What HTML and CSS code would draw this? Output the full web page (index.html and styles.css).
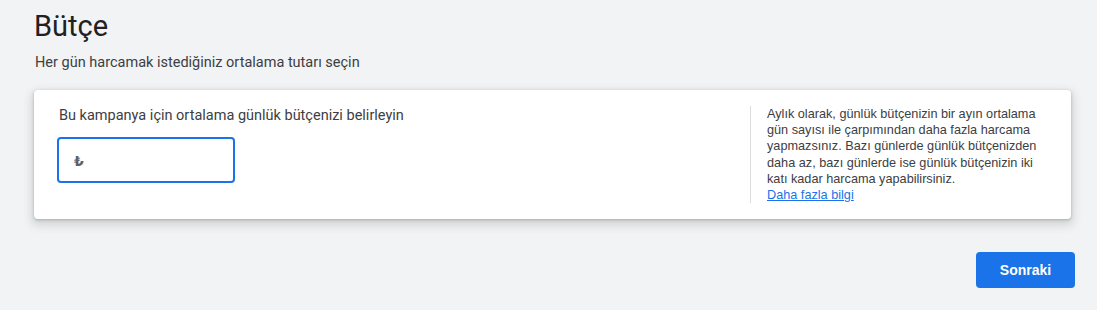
FILE: index.html
```html
<!DOCTYPE html>
<html lang="tr">
<head>
<meta charset="utf-8">
<title>Bütçe</title>
<link rel="stylesheet" href="styles.css">
</head>
<body>
<div class="page">
  <div class="content">
    <h1 class="title">Bütçe</h1>
    <p class="subtitle">Her gün harcamak istediğiniz ortalama tutarı seçin</p>
    <div class="card">
      <div class="card-main">
        <div class="label">Bu kampanya için ortalama günlük bütçenizi belirleyin</div>
        <div class="input-box"><span class="currency">₺</span></div>
      </div>
      <div class="card-help">
        Aylık olarak, günlük bütçenizin bir ayın ortalama gün sayısı ile çarpımından daha fazla harcama yapmazsınız. Bazı günlerde günlük bütçenizden daha az, bazı günlerde ise günlük bütçenizin iki katı kadar harcama yapabilirsiniz.<br>
        <a class="link" href="#">Daha fazla bilgi</a>
      </div>
    </div>
  </div>
  <div class="footer">
    <button class="next">Sonraki</button>
  </div>
</div>
</body>
</html>
```

FILE: styles.css
```css
html, body {
  margin: 0;
  padding: 0;
  background: #f1f3f4;
  font-family: Roboto, "Liberation Sans", Arial, sans-serif;
}
.page {
  width: 1097px;
  height: 310px;
  box-sizing: border-box;
}
.content {
  padding: 8px 26px 0 34px;
}
.title {
  margin: 0;
  font-size: 29px;
  line-height: 36px;
  font-weight: 400;
  color: #202124;
}
.subtitle {
  margin: 9px 0 0 1px;
  font-size: 14.5px;
  line-height: 20px;
  color: #3c4043;
}
.card {
  margin-top: 17px;
  background: #fff;
  border-radius: 4px;
  box-shadow: 0 1px 3px rgba(60,64,67,.3), 0 4px 8px 3px rgba(60,64,67,.15);
  display: flex;
  align-items: flex-start;
  padding: 16px 22px 16px 24px;
}
.card-main {
  flex: 1;
}
.label {
  font-size: 14.5px;
  line-height: 20px;
  color: #3c4043;
  margin-left: 1px;
}
.input-box {
  margin-top: 11px;
  margin-left: -1px;
  width: 178px;
  height: 46px;
  box-sizing: border-box;
  border: 2px solid #1a73e8;
  border-radius: 4px;
  display: flex;
  align-items: center;
  padding-left: 15px;
}
.currency {
  font-size: 14px;
  font-weight: 700;
  color: #5f6368;
  font-family: "DejaVu Sans", sans-serif;
  margin-top: 1px;
}
.card-help {
  width: 282px;
  border-left: 1px solid #dadce0;
  padding-left: 16px;
  font-family: "Liberation Sans", Arial, sans-serif;
  font-size: 12.7px;
  line-height: 16.2px;
  color: #3c4043;
}
.link {
  color: #1a73e8;
  text-decoration: underline;
}
.footer {
  display: flex;
  justify-content: flex-end;
  padding: 33px 22px 0 0;
}
.next {
  width: 99px;
  height: 36px;
  border: none;
  border-radius: 4px;
  background: #1a73e8;
  color: #fff;
  font-family: "Liberation Sans", Arial, sans-serif;
  font-weight: 700;
  font-size: 14px;
  padding: 0;
  cursor: pointer;
}
```
